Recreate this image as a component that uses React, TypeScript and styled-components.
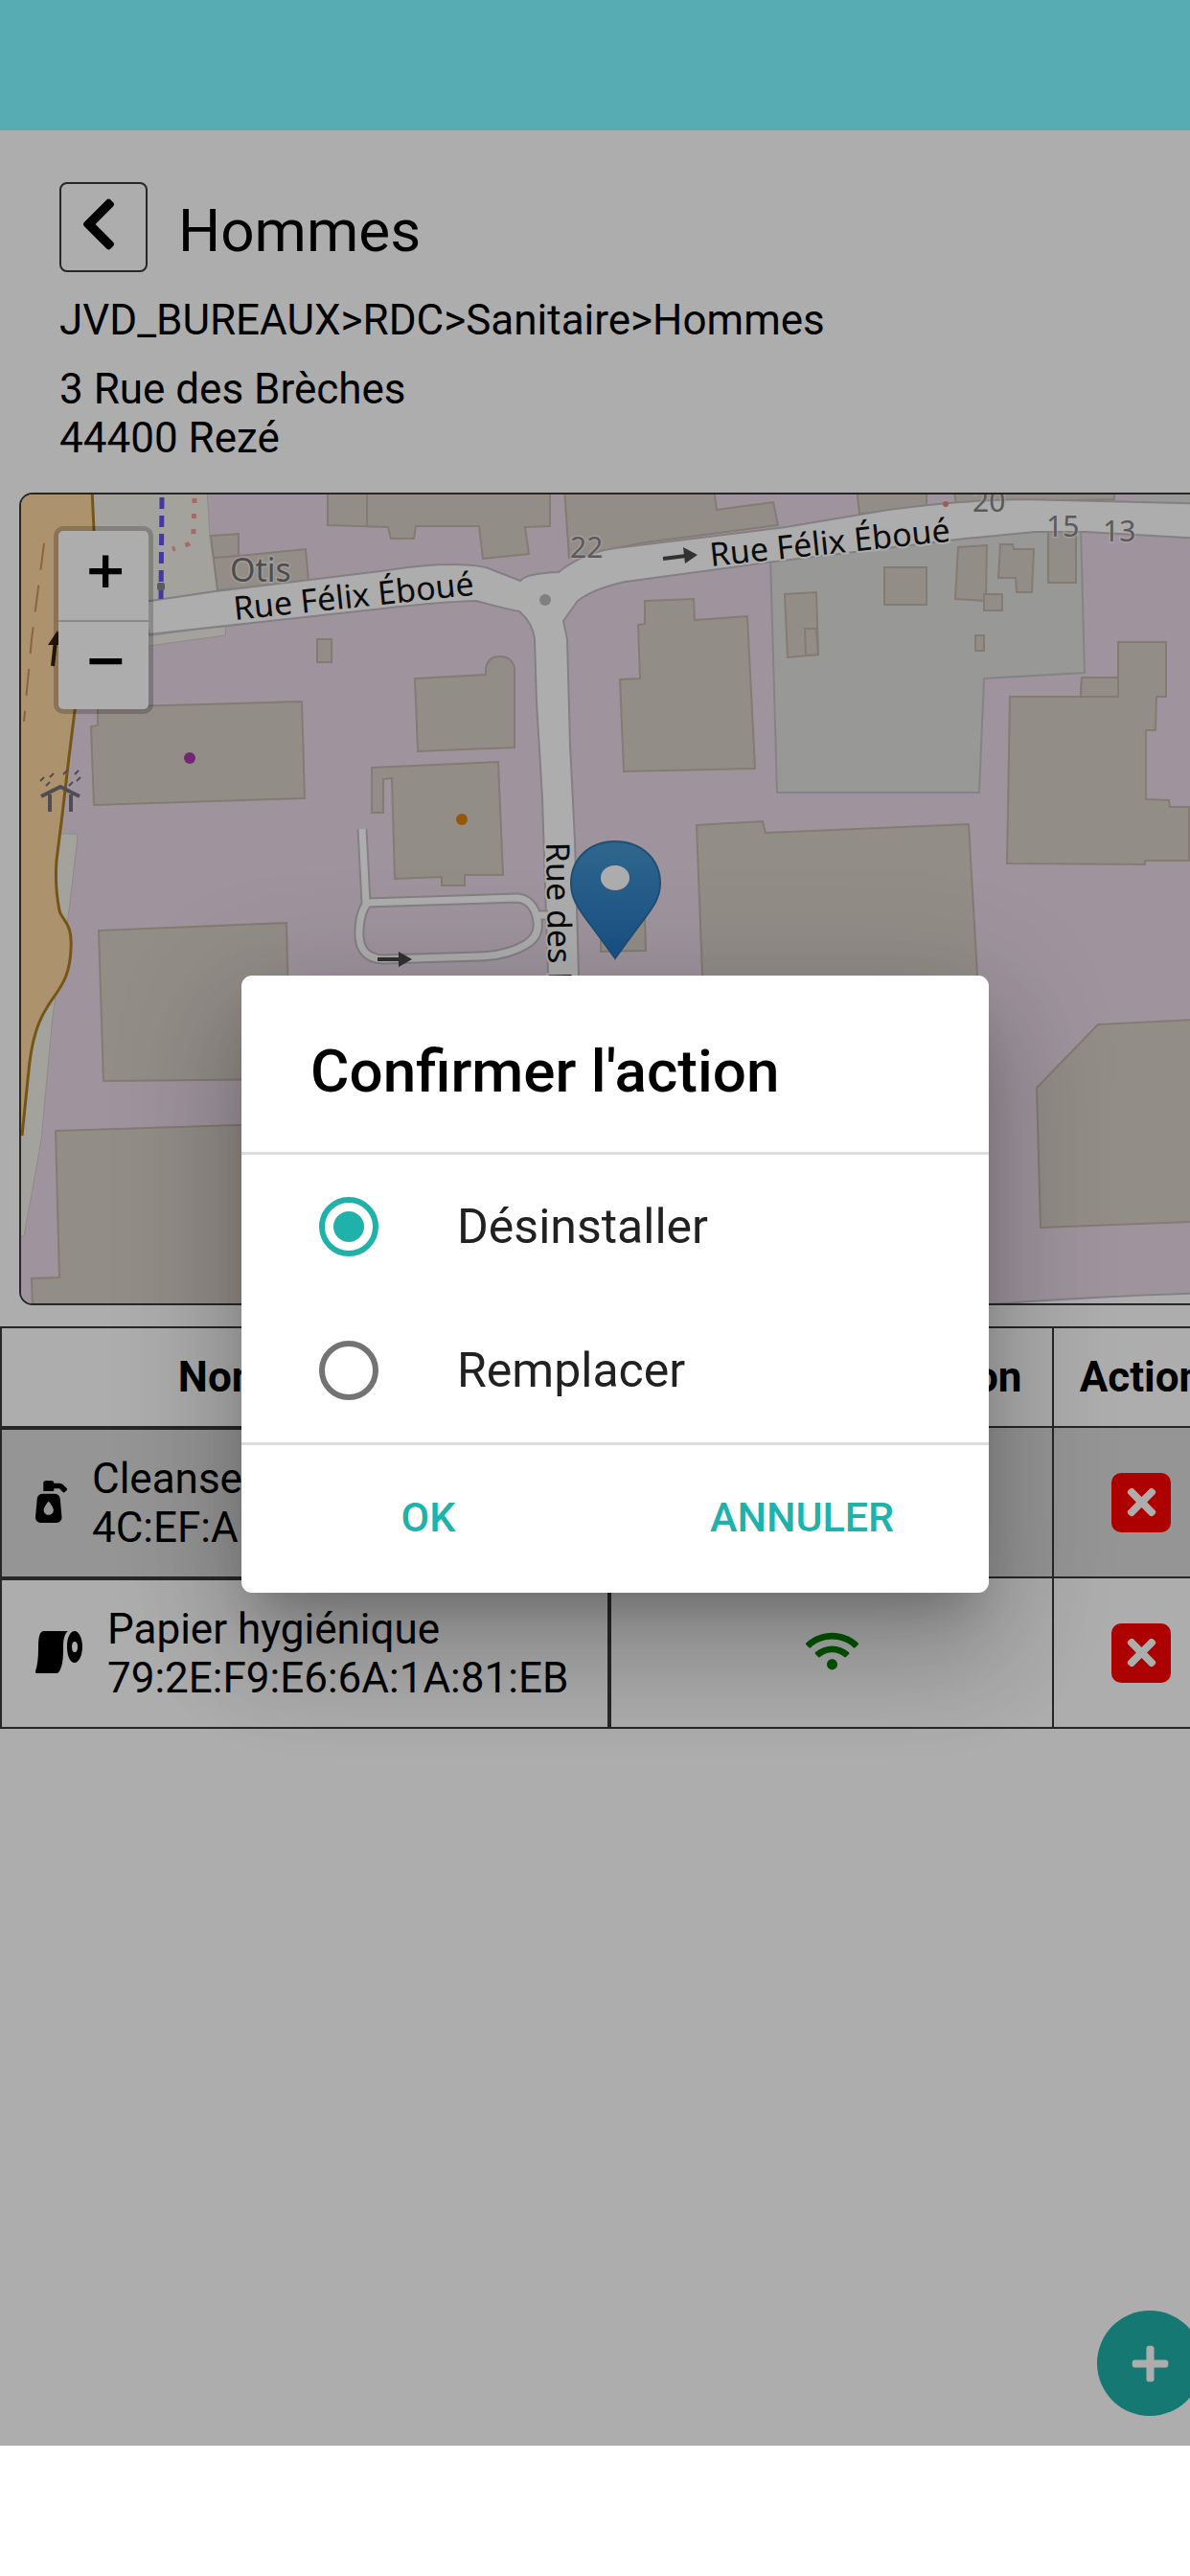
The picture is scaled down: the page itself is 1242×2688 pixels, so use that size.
import React, { useState } from "react";
import styled, { createGlobalStyle } from "styled-components";
import {
  FaChevronLeft,
  FaPlus,
  FaPumpSoap,
  FaTimes,
  FaWifi,
} from "react-icons/fa";

const color = {
  statusBar: "#57acb4",
  accent: "#20b2aa",
  ink: "#000000",
  line: "#3a3a3a",
  stripe: "#dcdcdc",
  danger: "#ff0000",
  success: "#008000",
  divider: "#dcdcdc",
};

const GlobalStyle = createGlobalStyle`
  *, *::before, *::after { box-sizing: border-box; }
  body {
    margin: 0;
    background: #ffffff;
    color: ${color.ink};
    font-family: Roboto, "Noto Sans", sans-serif;
    font-size: 44px;
    line-height: 51px;
  }
  button { font: inherit; color: inherit; cursor: pointer; }
`;

const Screen = styled.div`
  display: flex;
  flex-direction: column;
  min-height: 100vh;
  overflow: hidden;
`;

const StatusBar = styled.header`
  height: 136px;
  background: ${color.statusBar};
`;

const NavigationBar = styled.footer`
  height: 136px;
  background: #ffffff;
`;

/* The page is a little wider than the window and runs off its right edge. */
const Stage = styled.div`
  position: relative;
  flex: 1;
  margin-right: -42px;
`;

const Page = styled.main`
  padding-top: 54px;
`;

const Intro = styled.section`
  padding: 0 62px;
`;

const TitleRow = styled.div`
  display: flex;
  align-items: center;
  gap: 32px;
`;

const BackButton = styled.button`
  display: flex;
  align-items: center;
  justify-content: center;
  width: 92px;
  height: 94px;
  padding: 0 10px 6px 0;
  border: 2px solid ${color.line};
  border-radius: 8px;
  background: transparent;
  font-size: 62px;
`;

const PageTitle = styled.h1`
  margin: 0;
  padding-top: 7px;
  font-size: 62px;
  line-height: 72px;
  font-weight: 400;
`;

const Breadcrumb = styled.p`
  margin: 25px 0 21px;
`;

const Address = styled.address`
  font-style: normal;
`;

const MapCard = styled.section`
  position: relative;
  height: 848px;
  margin: 31px 20px 22px;
  border: 2px solid ${color.line};
  border-radius: 14px;
  overflow: hidden;
`;

const MapCanvas = styled.svg`
  display: block;
  width: 100%;
  height: 100%;
  font-family: "Noto Sans", sans-serif;
`;

const ZoomControl = styled.div`
  position: absolute;
  top: 33px;
  left: 34px;
  display: flex;
  flex-direction: column;
  border: 5px solid rgba(0, 0, 0, 0.2);
  border-radius: 10px;
  background-clip: padding-box;
  background-color: #ffffff;
`;

const ZoomButton = styled.button`
  width: 94px;
  height: 93px;
  padding: 0 0 12px;
  border: 0;
  background: transparent;
  font-family: "DejaVu Sans", sans-serif;
  font-weight: 700;
  font-size: 54px;
  text-indent: 4px;

  & + & {
    border-top: 2px solid #cccccc;
  }
`;

const DeviceTable = styled.table`
  width: 100%;
  table-layout: fixed;
  border-collapse: separate;
  border-spacing: 0;
`;

const NameCol = styled.col`
  width: 636px;
`;

const StateCol = styled.col`
  width: 464px;
`;

const HeadCell = styled.th`
  height: 106px;
  padding: 0;
  border: 2px solid ${color.line};
  border-left-width: 0;
  text-align: center;
  white-space: nowrap;

  &:first-child {
    border-left-width: 2px;
  }
`;

const Row = styled.tr<{ $striped?: boolean }>`
  background: ${(p) => (p.$striped ? color.stripe : "#ffffff")};
`;

const NameCell = styled.td`
  height: 157px;
  padding: 0 0 0 35px;
  border: 2px solid ${color.line};
`;

const Cell = styled.td<{ $first?: boolean }>`
  padding: 0;
  border: solid ${color.line};
  border-width: 0 2px 2px ${(p) => (p.$first ? "2px" : "0")};
`;

const Device = styled.div`
  display: flex;
  align-items: center;
  gap: 26px;
`;

const IconBox = styled.span<{ $width: number }>`
  display: flex;
  padding-bottom: 4px;

  & > svg {
    width: ${(p) => p.$width}px;
    height: 44px;
  }
`;

const Centered = styled.div`
  display: flex;
  align-items: center;
  justify-content: center;
`;

const Signal = styled(Centered)`
  color: ${color.success};
`;

const RemoveButton = styled.button`
  display: flex;
  align-items: center;
  justify-content: center;
  width: 62px;
  height: 62px;
  padding: 0;
  border: 0;
  border-radius: 10px;
  background: ${color.danger};
  color: #ffffff;
  font-size: 43px;
`;

const AddButton = styled.button`
  position: absolute;
  right: 29px;
  bottom: 31px;
  display: flex;
  align-items: center;
  justify-content: center;
  width: 110px;
  height: 110px;
  padding: 0;
  border: 0;
  border-radius: 50%;
  background: ${color.accent};
  color: #ffffff;
  font-size: 43px;
`;

const Backdrop = styled.div`
  position: absolute;
  inset: 0;
  display: flex;
  align-items: center;
  justify-content: center;
  padding-bottom: 8px;
  background: rgba(0, 0, 0, 0.32);
`;

const Dialog = styled.form`
  width: 780px;
  border-radius: 11px;
  background: #ffffff;
  box-shadow:
    0 31px 42px -20px rgba(0, 0, 0, 0.2),
    0 67px 106px 8px rgba(0, 0, 0, 0.14),
    0 25px 128px 22px rgba(0, 0, 0, 0.12);
`;

const DialogTitle = styled.h2`
  margin: 0;
  padding: 64px 72px 48px;
  font-size: 62px;
  line-height: 72px;
  font-weight: 500;
`;

const Options = styled.div`
  border-top: 3px solid ${color.divider};
  border-bottom: 3px solid ${color.divider};
`;

const Option = styled.label`
  display: flex;
  align-items: center;
  gap: 82px;
  height: 150px;
  padding: 0 81px;
  color: #212121;
  font-size: 50px;
`;

const Radio = styled.input`
  display: grid;
  place-content: center;
  width: 62px;
  height: 62px;
  margin: 0;
  border: 6px solid #737373;
  border-radius: 50%;
  appearance: none;

  &:checked {
    border-color: ${color.accent};
  }

  &:checked::before {
    content: "";
    width: 32px;
    height: 32px;
    border-radius: 50%;
    background: ${color.accent};
  }
`;

const DialogActions = styled.div`
  display: grid;
  grid-template-columns: 1fr 1fr;
`;

const DialogButton = styled.button`
  height: 154px;
  padding: 0 0 3px;
  border: 0;
  background: transparent;
  color: ${color.accent};
  font-size: 43px;
  font-weight: 500;
  text-transform: uppercase;
`;

const buildings = [
  "342,510 342,548 405,550 408,562 432,562 434,549 500,549 504,583 552,578 548,550 574,549 574,510",
  "589,510 594,582 673,566 812,548 807,524 748,532 745,510",
  "220,559 249,557 249,580 319,573 322,606 227,616",
  "331,667 346,667 346,691 331,691",
  "102,738 315,732 318,833 98,840 95,758 102,757",
  "388,801 520,795 525,913 485,913 485,924 461,924 461,915 412,917 409,812 400,813 400,848 388,848",
  "673,627 724,625 725,647 780,643 788,802 651,805 647,709 668,708 666,652 673,651",
  "819,620 852,618 854,683 822,686",
  "840,656 852,656 854,683 841,684",
  "923,592 967,592 967,631 923,631",
  "1000,571 1030,569 1029,627 997,625",
  "1044,568 1057,568 1058,573 1079,573 1077,618 1061,618 1060,603 1042,603",
  "1027,620 1046,620 1046,637 1027,637",
  "1094,552 1123,552 1123,608 1094,608",
  "1018,663 1027,663 1027,679 1018,679",
  "1054,727 1128,727 1129,707 1167,707 1167,670 1217,670 1217,727 1207,727 1206,762 1196,762 1196,834 1220,835 1221,842 1241,842 1241,898 1195,898 1195,902 1051,901",
  "1129,707 1167,707 1167,727 1128,727",
  "727,861 796,857 799,869 1011,860 1020,1017 1026,1120 740,1120 733,1017",
  "894,510 897,536 967,530 967,510",
  "995,510 998,525 1163,521 1163,510",
  "1146,1069 1270,1063 1270,1274 1086,1281 1082,1135",
  "103,971 299,963 303,1126 108,1128",
  "58,1180 560,1164 570,1366 34,1366 33,1334 62,1333",
  "627,960 673,957 674,992 627,993",
];

const motorway =
  "M96,510 L98,553 Q97,620 78,742 L72,790 L65,850 L59,898 Q57,925 62,950 C64,960 76,962 74,990 C73,1025 58,1035 48,1053 Q34,1075 30,1117 L23,1185";

const mainRoad =
  "M150,628 L225,617 L405,595 Q470,585 507,592 L543,606 Q550,598 583,597 Q610,575 650,571 L820,550 L927,532 Q1000,522 1067,521 L1270,526 L1270,563 L1133,555 L1080,555 L1007,562 L900,575 L800,587 L653,607 Q620,614 603,627 L588,648 L592,667 L595,777 L600,877 L604,1017 L608,1100 L576,1100 L572,1017 L566,833 L560,733 L558,667 Q556,650 542,638 Q522,634 497,627 Q460,628 400,635 L155,662 Z";

const serviceWay =
  "M378,865 L382,942 L540,937 Q552,938 558,950 Q568,975 548,986 Q530,997 500,998 L400,1001 Q373,1000 375,970 Q376,950 384,942 M561,955 L572,955";

function SiteMap() {
  return (
    <MapCanvas
      viewBox="22 516 1240 844"
      preserveAspectRatio="xMinYMin slice"
      role="img"
      aria-label="Carte du site"
    >
      <defs>
        <linearGradient id="pin" x1="0" y1="0" x2="0" y2="1">
          <stop offset="0" stopColor="#4797ce" />
          <stop offset="1" stopColor="#2478c8" />
        </linearGradient>
      </defs>
      <rect x="22" y="510" width="1260" height="860" fill="#ebdbe8" />
      <g fill="#f0efe8" stroke="#d0ccc8" strokeWidth="1">
        <path d="M92,510 H216 L219,560 L227,616 L80,640 Z" />
        <path d="M100,672 L236,652 L235,663 L155,674 L100,682 Z" />
        <path d="M60,870 L81,870 L80,883 L72,950 L55,1060 L43,1190 L25,1290 L10,1290 V1100 L50,950 Z" />
      </g>
      <path d={`${motorway} L10,1185 L10,510 Z`} fill="#ffd7a2" />
      <path d={motorway} fill="none" stroke="#ac8024" strokeWidth="3" />
      <path
        d="M46,567 L33,667 L25,753"
        fill="none"
        stroke="#c99560"
        strokeWidth="2"
        strokeDasharray="28 16"
      />
      <path d="M55,695 L58,668" stroke="#3a2410" strokeWidth="4" />
      <path d="M60,658 L50,673 L66,673 Z" fill="#3a2410" />
      <path
        d="M804,580 L1128,550 L1132,702 L1027,708 L1022,827 L811,827 Z"
        fill="#e0e0df"
        stroke="#c3c3c8"
        strokeWidth="2"
      />
      <path d="M1186,510 H1270 V530 L1186,524 Z" fill="#e0e0df" />
      <g fill="#d9d0c9" stroke="#c3b5a9" strokeWidth="2">
        {buildings.map((points) => (
          <polygon key={points} points={points} />
        ))}
        <path d="M433,708 L507,704 V697 Q510,685 520,685 Q534,684 537,697 V780 L436,784 Z" />
        <path d="M383,510 V549 M222,582 L249,580" fill="none" />
      </g>
      <path d={mainRoad} fill="#ffffff" stroke="#c2bcc0" strokeWidth="2" />
      <path d="M1020,1362 Q1150,1352 1270,1349 V1370 H1020 Z" fill="#ffffff" stroke="#c2bcc0" strokeWidth="2" />
      <path d={serviceWay} fill="none" stroke="#c2bcc0" strokeWidth="11" />
      <path d={serviceWay} fill="none" stroke="#ffffff" strokeWidth="7" />
      <g stroke="#4a4a4a" fill="#4a4a4a" strokeWidth="4">
        <path d="M394,1001 H418" />
        <path d="M416,993 L430,1001 L416,1009 Z" strokeWidth="0" />
        <path d="M692,583 L716,580" />
        <path d="M713,571 L728,579 L715,588 Z" strokeWidth="0" />
      </g>
      <path d="M169,519 L168,625" stroke="#6454e8" strokeWidth="5" strokeDasharray="12 7" fill="none" />
      <rect x="164" y="608" width="8" height="8" rx="2" fill="#888888" />
      <path
        d="M203,520 L202,553 Q202,566 196,568 L180,573"
        stroke="#f2a09a"
        strokeWidth="5"
        strokeDasharray="5 11"
        fill="none"
      />
      <circle cx="987" cy="526" r="3" fill="#f2847c" />
      <circle cx="569" cy="626" r="6" fill="#bdbdbd" />
      <circle cx="198" cy="791" r="6" fill="#ac39ac" />
      <circle cx="482" cy="855" r="6" fill="#dc8210" />
      <g stroke="#77707c" fill="none" strokeWidth="4">
        <path d="M43,831 L63,821 L83,831 M52,829 V847 M74,829 V847" />
        <path d="M42,815 l4,-4 M52,811 l4,-4 M48,820 l4,-4 M66,808 l4,-4 M78,808 l4,-4 M72,820 l4,-4 M80,815 l4,-4" strokeWidth="2" />
      </g>

      <g fill="#77716f" stroke="#ffffff" strokeOpacity="0.5" strokeWidth="3" paintOrder="stroke">
        <text x="240" y="607" fontSize="34">Otis</text>
        <g fontSize="30" fill="#8a8486">
          <text x="595" y="582">22</text>
          <text x="1015" y="534">20</text>
          <text x="1092" y="560">15</text>
          <text x="1151" y="565">13</text>
        </g>
      </g>
      <g fontSize="34" fill="#111111" stroke="#ffffff" strokeWidth="4" paintOrder="stroke">
        <text transform="translate(245 647) rotate(-6)">Rue Félix Éboué</text>
        <text transform="translate(742 591) rotate(-6)">Rue Félix Éboué</text>
        <text transform="translate(570 879) rotate(89)">Rue des Brèches</text>
      </g>

      <path
        d="M642,878 C669,878 689,896 689,922 C689,940 677,952 667,966 Q655,982 642,1000 Q629,982 617,966 C607,952 596,940 596,922 C596,896 615,878 642,878 Z"
        fill="url(#pin)"
        stroke="#2f75ae"
        strokeWidth="2"
      />
      <ellipse cx="642" cy="916" rx="15" ry="13" fill="#ffffff" />
    </MapCanvas>
  );
}

function PaperRoll() {
  return (
    <svg viewBox="0 0 49 44" fill="currentColor" aria-hidden="true">
      <path d="M9,0 H34 C30,3 29,9 29,18 C29,30 28,37 25,42 Q24,44 22,44 H1 Q0,44 0,42 C2,36 3,28 3,18 C3,7 4,0 9,0 Z" />
      <path
        fillRule="evenodd"
        d="M41,0 C45,0 49,7 49,16 C49,26 45,33 41,33 C36,33 33,26 33,16 C33,7 36,0 41,0 Z M41,11 C39,11 38,13 38,16 C38,20 39,22 41,22 C43,22 44,20 44,16 C44,13 43,11 41,11 Z"
      />
    </svg>
  );
}

const devices = [
  { name: "Cleanseat", mac: "4C:EF:A1:3B:72:0D:5E", Icon: FaPumpSoap, iconWidth: 33 },
  { name: "Papier hygiénique", mac: "79:2E:F9:E6:6A:1A:81:EB", Icon: PaperRoll, iconWidth: 49 },
];

const choices = ["Désinstaller", "Remplacer"];

export default function App() {
  const [choice, setChoice] = useState(choices[0]);

  return (
    <>
      <GlobalStyle />
      <Screen>
        <StatusBar />
        <Stage>
          <Page>
            <Intro>
              <TitleRow>
                <BackButton type="button" aria-label="Retour">
                  <FaChevronLeft />
                </BackButton>
                <PageTitle>Hommes</PageTitle>
              </TitleRow>
              <Breadcrumb>JVD_BUREAUX&gt;RDC&gt;Sanitaire&gt;Hommes</Breadcrumb>
              <Address>
                3 Rue des Brèches
                <br />
                44400 Rezé
              </Address>
            </Intro>

            <MapCard>
              <SiteMap />
              <ZoomControl>
                <ZoomButton type="button" aria-label="Zoom avant">+</ZoomButton>
                <ZoomButton type="button" aria-label="Zoom arrière">−</ZoomButton>
              </ZoomControl>
            </MapCard>

            <DeviceTable>
              <colgroup>
                <NameCol />
                <StateCol />
                <col />
              </colgroup>
              <thead>
                <tr>
                  <HeadCell scope="col">Nom appareil</HeadCell>
                  <HeadCell scope="col">État de la connexion</HeadCell>
                  <HeadCell scope="col">Action</HeadCell>
                </tr>
              </thead>
              <tbody>
                {devices.map(({ name, mac, Icon, iconWidth }, index) => (
                  <Row key={mac} $striped={index % 2 === 0}>
                    <NameCell>
                      <Device>
                        <IconBox $width={iconWidth}>
                          <Icon />
                        </IconBox>
                        <span>
                          {name}
                          <br />
                          {mac}
                        </span>
                      </Device>
                    </NameCell>
                    <Cell $first>
                      <Signal>
                        <IconBox $width={55}>
                          <FaWifi />
                        </IconBox>
                      </Signal>
                    </Cell>
                    <Cell>
                      <Centered>
                        <RemoveButton type="button" aria-label={`Retirer ${name}`}>
                          <FaTimes />
                        </RemoveButton>
                      </Centered>
                    </Cell>
                  </Row>
                ))}
              </tbody>
            </DeviceTable>
          </Page>

          <AddButton type="button" aria-label="Ajouter">
            <FaPlus />
          </AddButton>

          <Backdrop>
            <Dialog
              role="dialog"
              aria-modal="true"
              aria-labelledby="dialog-title"
              onSubmit={(event) => event.preventDefault()}
            >
              <DialogTitle id="dialog-title">Confirmer l'action</DialogTitle>
              <Options>
                {choices.map((label) => (
                  <Option key={label}>
                    <Radio
                      type="radio"
                      name="action"
                      value={label}
                      checked={choice === label}
                      onChange={() => setChoice(label)}
                    />
                    {label}
                  </Option>
                ))}
              </Options>
              <DialogActions>
                <DialogButton type="submit">OK</DialogButton>
                <DialogButton type="button">Annuler</DialogButton>
              </DialogActions>
            </Dialog>
          </Backdrop>
        </Stage>
        <NavigationBar />
      </Screen>
    </>
  );
}
